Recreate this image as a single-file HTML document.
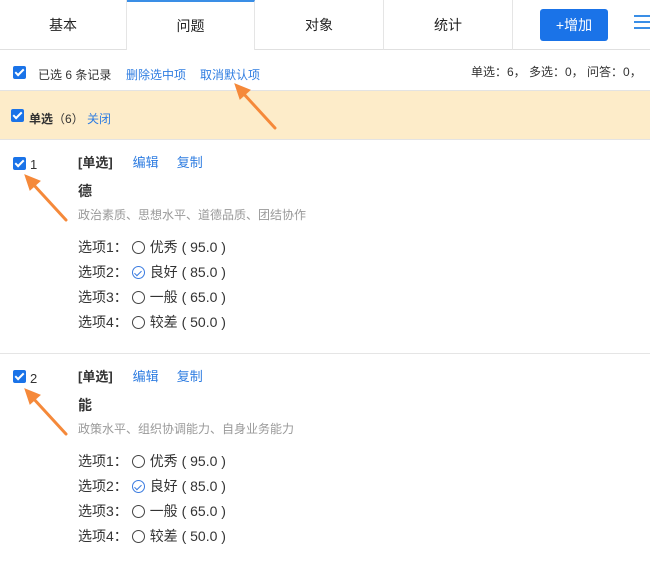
<!DOCTYPE html><html><head><meta charset="utf-8"><style>
*{margin:0;padding:0;box-sizing:border-box}
body{width:650px;height:562px;overflow:hidden;background:#fff;font-family:"Liberation Sans","Noto Sans CJK SC",sans-serif;color:#333;position:relative}
.a{position:absolute;white-space:nowrap}
.tab{position:absolute;top:0;height:50px;line-height:50px;text-align:center;font-size:14px;color:#222;border-right:1px solid #e5e5e5;border-bottom:1px solid #e0e0e0}
.cb{position:absolute;width:13px;height:13px;background:#1a73e8;border-radius:2px}
.cb:after{content:"";position:absolute;left:4px;top:1px;width:3px;height:7px;border:solid #fff;border-width:0 2px 2px 0;transform:rotate(45deg)}
.blue{color:#2f7de1}
.rad{display:inline-block;width:13px;height:13px;border:1px solid #444;border-radius:50%;vertical-align:-2px;margin-right:5px;position:relative}
.rad.on{border-color:#3a7be0}
.rad.on:after{content:"";position:absolute;left:3.5px;top:1.5px;width:3px;height:6px;border:solid #3a7be0;border-width:0 1.5px 1.5px 0;transform:rotate(45deg)}
.opt{font-size:14px;color:#333}
</style></head><body>
<div class="tab" style="left:0;width:127px">基本</div>
<div class="tab" style="left:127px;width:128px;border-top:2px solid #3a8ee6;border-bottom:none;line-height:48px">问题</div>
<div class="tab" style="left:255px;width:129px">对象</div>
<div class="tab" style="left:384px;width:129px">统计</div>
<div class="a" style="left:513px;top:0;width:137px;height:50px;border-bottom:1px solid #e0e0e0"></div>
<div class="a" style="left:540px;top:9px;width:68px;height:32px;background:#1a73e8;border-radius:3px;color:#fff;font-size:14px;line-height:32px;text-align:center">+增加</div>
<div class="a" style="left:634px;top:15px;width:16px;height:2px;background:#3a8ee6;box-shadow:0 6px 0 #3a8ee6,0 12px 0 #3a8ee6"></div>
<div class="cb" style="left:13px;top:66px"></div>
<div class="a" style="left:38px;top:66px;font-size:12px">已选 6 条记录</div>
<div class="a blue" style="left:126px;top:66px;font-size:12px">删除选中项</div>
<div class="a blue" style="left:200px;top:66px;font-size:12px">取消默认项</div>
<div class="a" style="left:471px;top:63px;font-size:12px">单选：6， 多选：0， 问答：0，</div>
<div class="a" style="left:0;top:90px;width:650px;height:50px;background:#fdecc9;border-top:1px solid #e3e3e3;border-bottom:1px solid #e3e3e3"></div>
<div class="cb" style="left:11px;top:109px"></div>
<div class="a" style="left:29px;top:110px;font-size:12px"><b style="font-weight:bold">单选</b>（6） <span class="blue">关闭</span></div>
<div class="a" style="left:0;top:353px;width:650px;height:1px;background:#e5e5e5"></div>

<div class="cb" style="left:13px;top:157px"></div><div class="a" style="left:30px;top:157px;font-size:13px">1</div>
<div class="a" style="left:78px;top:152px;font-size:13px"><b>[单选]</b><span class="blue" style="margin-left:20px">编辑</span><span class="blue" style="margin-left:18px">复制</span></div>
<div class="a" style="left:78px;top:181px;font-size:14px;font-weight:bold">德</div>
<div class="a" style="left:78px;top:206px;font-size:12px;color:#999">政治素质、思想水平、道德品质、团结协作</div>
<div class="a opt" style="left:78px;top:237px">选项1： <span class="rad"></span>优秀 ( 95.0 )</div>
<div class="a opt" style="left:78px;top:262px">选项2： <span class="rad on"></span>良好 ( 85.0 )</div>
<div class="a opt" style="left:78px;top:287px">选项3： <span class="rad"></span>一般 ( 65.0 )</div>
<div class="a opt" style="left:78px;top:312px">选项4： <span class="rad"></span>较差 ( 50.0 )</div>

<div class="cb" style="left:13px;top:370px"></div><div class="a" style="left:30px;top:371px;font-size:13px">2</div>
<div class="a" style="left:78px;top:366px;font-size:13px"><b>[单选]</b><span class="blue" style="margin-left:20px">编辑</span><span class="blue" style="margin-left:18px">复制</span></div>
<div class="a" style="left:78px;top:395px;font-size:14px;font-weight:bold">能</div>
<div class="a" style="left:78px;top:420px;font-size:12px;color:#999">政策水平、组织协调能力、自身业务能力</div>
<div class="a opt" style="left:78px;top:451px">选项1： <span class="rad"></span>优秀 ( 95.0 )</div>
<div class="a opt" style="left:78px;top:476px">选项2： <span class="rad on"></span>良好 ( 85.0 )</div>
<div class="a opt" style="left:78px;top:501px">选项3： <span class="rad"></span>一般 ( 65.0 )</div>
<div class="a opt" style="left:78px;top:526px">选项4： <span class="rad"></span>较差 ( 50.0 )</div>

<svg class="a" style="left:0;top:0" width="650" height="562">
<g fill="#f5893a" stroke="#f5893a" stroke-width="3" stroke-linecap="round">
<line x1="275" y1="128" x2="242" y2="92"/><polygon points="235,84 250,90 240,99" stroke-width="1"/>
<line x1="66" y1="220" x2="32" y2="183"/><polygon points="25,175 40,181 30,190" stroke-width="1"/>
<line x1="66" y1="434" x2="32" y2="397"/><polygon points="25,389 40,395 30,404" stroke-width="1"/>
</g></svg>
</body></html>
